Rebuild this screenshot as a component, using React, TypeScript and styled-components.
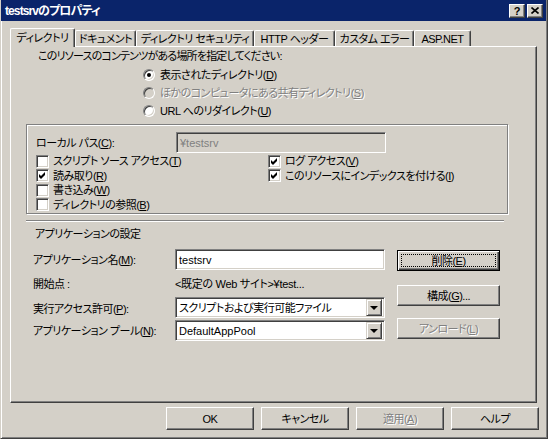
import styled, { createGlobalStyle } from "styled-components";

const GlobalStyle = createGlobalStyle`
  html, body {
    margin: 0;
    padding: 0;
    background: #d4d0c8;
  }
  body {
    font-family: "Liberation Sans", "Noto Sans CJK JP", sans-serif;
    font-size: 11px;
    line-height: 14px;
    letter-spacing: -0.5px;
    color: #000;
    font-feature-settings: "palt";
  }
  * {
    box-sizing: border-box;
  }
`;

const Window = styled.div`
  width: 548px;
  height: 439px;
  background: #d4d0c8;
  border-left: 1px solid #d4d0c8;
  border-right: 1px solid #404040;
  border-bottom: 1px solid #404040;
  box-shadow: inset 1px 0 #fff, inset -1px -1px #808080;
  display: flex;
  flex-direction: column;
  overflow: hidden;
`;

const TitleBar = styled.div`
  height: 21px;
  margin: 0 1px 0 -1px;
  background: #0a246a;
  color: #fff;
  font-weight: bold;
  font-size: 12px;
  letter-spacing: -0.9px;
  display: flex;
  align-items: center;
  padding: 0 3px 0 5px;
`;

const TitleText = styled.span`
  flex: 1;
`;

const TitleButtons = styled.div`
  display: flex;
  gap: 2px;
`;

const TitleButton = styled.div`
  width: 16px;
  height: 14px;
  background: #d4d0c8;
  border: 1px solid;
  border-color: #fff #404040 #404040 #fff;
  box-shadow: inset -1px -1px #808080;
  color: #000;
  display: flex;
  align-items: center;
  justify-content: center;
  font-family: "Liberation Sans", sans-serif;
  font-size: 11px;
  font-weight: bold;
  letter-spacing: 0;
`;

const Body = styled.div`
  flex: 1;
  padding: 7px 8px 0 9px;
  display: flex;
  flex-direction: column;
`;

const TabStrip = styled.div`
  height: 18px;
  display: flex;
  align-items: flex-end;
`;

const Tab = styled.div<{ $w: number; $active?: boolean }>`
  width: ${(p) => p.$w}px;
  height: ${(p) => (p.$active ? 19 : 16)}px;
  margin-bottom: ${(p) => (p.$active ? -1 : 0)}px;
  position: relative;
  z-index: ${(p) => (p.$active ? 2 : 0)};
  background: #d4d0c8;
  border-top: 1px solid #fff;
  border-left: 1px solid #fff;
  border-right: 1px solid #404040;
  border-radius: 2px 2px 0 0;
  box-shadow: inset -1px 0 #808080;
  display: flex;
  align-items: ${(p) => (p.$active ? "flex-start" : "center")};
  padding-top: ${(p) => (p.$active ? 2 : 0)}px;
  justify-content: center;
  white-space: nowrap;
`;

const Panel = styled.div`
  width: 527px;
  height: 357px;
  position: relative;
  z-index: 1;
  background: #d4d0c8;
  border-top: 1px solid #fff;
  border-left: 1px solid #fff;
  border-right: 1px solid #404040;
  border-bottom: 1px solid #404040;
  box-shadow: inset -1px -1px #808080;
  padding-top: 2px;
  display: flex;
  flex-direction: column;
`;

const Prompt = styled.div`
  margin-left: 27px;
  white-space: nowrap;
  letter-spacing: -0.8px;
`;

const RadioList = styled.div`
  margin: 3px 0 0 132px;
  display: flex;
  flex-direction: column;
`;

const RadioRow = styled.label<{ $disabled?: boolean }>`
  height: 18px;
  display: flex;
  align-items: center;
  gap: 5px;
  white-space: nowrap;
  color: ${(p) => (p.$disabled ? "#808080" : "#000")};
  text-shadow: ${(p) => (p.$disabled ? "1px 1px #fff" : "none")};
`;

const RadioDot = styled.span<{ $checked?: boolean; $disabled?: boolean }>`
  width: 12px;
  height: 12px;
  border-radius: 50%;
  border: 1px solid;
  border-color: #808080 #fff #fff #808080;
  box-shadow: inset 1px 1px #404040, inset -1px -1px #d4d0c8;
  background: ${(p) => (p.$disabled ? "#d4d0c8" : "#fff")};
  display: flex;
  align-items: center;
  justify-content: center;
  flex-shrink: 0;
  &::after {
    content: "";
    width: 4px;
    height: 4px;
    border-radius: 50%;
    background: #000;
    display: ${(p) => (p.$checked ? "block" : "none")};
  }
`;

const GroupBox = styled.div`
  margin: 4px 0 0 15px;
  width: 482px;
  height: 90px;
  border: 1px solid #808080;
  box-shadow: inset 1px 1px #fff, 1px 1px #fff;
  padding: 7px 0 0 9px;
  display: flex;
  flex-direction: column;
`;

const PathRow = styled.div`
  height: 21px;
  display: flex;
  align-items: center;
`;

const PathLabel = styled.span`
  width: 140px;
  white-space: nowrap;
`;

const TextBox = styled.div<{ $disabled?: boolean; $w: number }>`
  width: ${(p) => p.$w}px;
  height: 21px;
  background: ${(p) => (p.$disabled ? "#d4d0c8" : "#fff")};
  color: ${(p) => (p.$disabled ? "#808080" : "#000")};
  border: 1px solid;
  border-color: #808080 #fff #fff #808080;
  box-shadow: inset 1px 1px #404040, inset -1px -1px #d4d0c8;
  padding: 0 3px;
  display: flex;
  align-items: center;
  white-space: nowrap;
  overflow: hidden;
  letter-spacing: 0;
`;

const CheckGrid = styled.div`
  margin-top: 1px;
  display: grid;
  grid-template-columns: 232px 1fr;
  grid-auto-flow: column;
  grid-template-rows: repeat(4, 14.5px);
`;

const CheckRow = styled.label`
  display: flex;
  align-items: center;
  gap: 4px;
  white-space: nowrap;
`;

const CheckBox = styled.span`
  width: 13px;
  height: 13px;
  flex-shrink: 0;
  background: #fff;
  border: 1px solid;
  border-color: #808080 #fff #fff #808080;
  box-shadow: inset 1px 1px #404040, inset -1px -1px #d4d0c8;
  display: flex;
  align-items: center;
  justify-content: center;
`;

const Separator = styled.div`
  margin: 6px 0 0 15px;
  width: 478px;
  height: 2px;
  border-top: 1px solid #808080;
  border-bottom: 1px solid #fff;
`;

const SectionTitle = styled.div`
  margin: 5px 0 0 24px;
  white-space: nowrap;
`;

const AppArea = styled.div`
  margin: 8px 0 0 22px;
  display: flex;
`;

const AppGrid = styled.div`
  display: grid;
  grid-template-columns: 142px 210px;
  grid-template-rows: 21px 27px 23px 21px;
  align-items: start;
`;

const AppLabel = styled.span`
  white-space: nowrap;
  align-self: center;
`;

const AppValue = styled.span`
  align-self: center;
  white-space: nowrap;
  letter-spacing: -0.3px;
`;

const Select = styled.div`
  width: 210px;
  height: 21px;
  background: #fff;
  border: 1px solid;
  border-color: #808080 #fff #fff #808080;
  box-shadow: inset 1px 1px #404040, inset -1px -1px #d4d0c8;
  padding: 2px 2px 2px 3px;
  display: flex;
  align-items: center;
  white-space: nowrap;
`;

const SelectText = styled.span<{ $latin?: boolean }>`
  flex: 1;
  overflow: hidden;
  letter-spacing: ${(p) => (p.$latin ? "0" : "-0.5px")};
`;

const DropButton = styled.span`
  width: 16px;
  height: 17px;
  background: #d4d0c8;
  border: 1px solid;
  border-color: #d4d0c8 #404040 #404040 #d4d0c8;
  box-shadow: inset 1px 1px #fff, inset -1px -1px #808080;
  display: flex;
  align-items: center;
  justify-content: center;
  &::after {
    content: "";
    border-left: 4px solid transparent;
    border-right: 4px solid transparent;
    border-top: 4px solid #000;
    margin-top: 1px;
  }
`;

const ButtonColumn = styled.div`
  margin-left: 12px;
  display: flex;
  flex-direction: column;
`;

const Button = styled.div<{
  $w: number;
  $h: number;
  $mt?: number;
  $default?: boolean;
  $disabled?: boolean;
}>`
  width: ${(p) => p.$w}px;
  height: ${(p) => p.$h}px;
  margin-top: ${(p) => p.$mt ?? 0}px;
  background: #d4d0c8;
  border: 1px solid;
  border-color: ${(p) => (p.$default ? "#000" : "#fff #404040 #404040 #fff")};
  box-shadow: ${(p) =>
    p.$default
      ? "inset 1px 1px #fff, inset -1px -1px #404040, inset -2px -2px #808080"
      : "inset -1px -1px #808080"};
  color: ${(p) => (p.$disabled ? "#808080" : "#000")};
  text-shadow: ${(p) => (p.$disabled ? "1px 1px #fff" : "none")};
  display: flex;
  align-items: center;
  justify-content: center;
  white-space: nowrap;
  position: relative;
`;

const FocusRing = styled.span`
  position: absolute;
  inset: 3px;
  border: 1px dotted #000;
`;

const ButtonRow = styled.div`
  margin-top: 4px;
  display: flex;
  justify-content: flex-end;
  gap: 7px;
`;

const Check = () => (
  <svg width="9" height="9" viewBox="0 0 9 9">
    <polygon points="1,3 3,5 7,1 7,4 3,8 1,6" fill="#000" />
  </svg>
);

const CloseIcon = () => (
  <svg width="8" height="7" viewBox="0 0 8 7">
    <path d="M0.5 0.5 L7.5 6.5 M7.5 0.5 L0.5 6.5" stroke="#000" strokeWidth="1.6" />
  </svg>
);

const tabs: { label: string; w: number }[] = [
  { label: "ディレクトリ", w: 65 },
  { label: "ドキュメント", w: 61 },
  { label: "ディレクトリ セキュリティ", w: 118 },
  { label: "HTTP ヘッダー", w: 81 },
  { label: "カスタム エラー", w: 79 },
  { label: "ASP.NET", w: 57 },
];

const App = () => {
  return (
    <>
      <GlobalStyle />
      <Window>
        <TitleBar>
          <TitleText>testsrvのプロパティ</TitleText>
          <TitleButtons>
            <TitleButton>?</TitleButton>
            <TitleButton>
              <CloseIcon />
            </TitleButton>
          </TitleButtons>
        </TitleBar>
        <Body>
          <TabStrip>
            {tabs.map((t, i) => (
              <Tab key={t.label} $w={t.w} $active={i === 0}>
                {t.label}
              </Tab>
            ))}
          </TabStrip>
          <Panel>
            <Prompt>このリソースのコンテンツがある場所を指定してください:</Prompt>
            <RadioList>
              <RadioRow>
                <RadioDot $checked />
                <span>
                  表示されたディレクトリ(<u>D</u>)
                </span>
              </RadioRow>
              <RadioRow $disabled>
                <RadioDot $disabled />
                <span>
                  ほかのコンピュータにある共有ディレクトリ(<u>S</u>)
                </span>
              </RadioRow>
              <RadioRow>
                <RadioDot />
                <span>
                  URL へのリダイレクト(<u>U</u>)
                </span>
              </RadioRow>
            </RadioList>
            <GroupBox>
              <PathRow>
                <PathLabel>
                  ローカル パス(<u>C</u>):
                </PathLabel>
                <TextBox $disabled $w={210}>
                  ¥testsrv
                </TextBox>
              </PathRow>
              <CheckGrid>
                <CheckRow>
                  <CheckBox />
                  <span>
                    スクリプト ソース アクセス(<u>T</u>)
                  </span>
                </CheckRow>
                <CheckRow>
                  <CheckBox>
                    <Check />
                  </CheckBox>
                  <span>
                    読み取り(<u>R</u>)
                  </span>
                </CheckRow>
                <CheckRow>
                  <CheckBox />
                  <span>
                    書き込み(<u>W</u>)
                  </span>
                </CheckRow>
                <CheckRow>
                  <CheckBox />
                  <span>
                    ディレクトリの参照(<u>B</u>)
                  </span>
                </CheckRow>
                <CheckRow>
                  <CheckBox>
                    <Check />
                  </CheckBox>
                  <span>
                    ログ アクセス(<u>V</u>)
                  </span>
                </CheckRow>
                <CheckRow>
                  <CheckBox>
                    <Check />
                  </CheckBox>
                  <span>
                    このリソースにインデックスを付ける(<u>I</u>)
                  </span>
                </CheckRow>
              </CheckGrid>
            </GroupBox>
            <Separator />
            <SectionTitle>アプリケーションの設定</SectionTitle>
            <AppArea>
              <AppGrid>
                <AppLabel>
                  アプリケーション名(<u>M</u>):
                </AppLabel>
                <TextBox $w={210}>testsrv</TextBox>
                <AppLabel>開始点 :</AppLabel>
                <AppValue>&lt;既定の Web サイト&gt;¥test...</AppValue>
                <AppLabel>
                  実行アクセス許可(<u>P</u>):
                </AppLabel>
                <Select>
                  <SelectText>スクリプトおよび実行可能ファイル</SelectText>
                  <DropButton />
                </Select>
                <AppLabel>
                  アプリケーション プール(<u>N</u>):
                </AppLabel>
                <Select>
                  <SelectText $latin>DefaultAppPool</SelectText>
                  <DropButton />
                </Select>
              </AppGrid>
              <ButtonColumn>
                <Button $w={103} $h={21} $mt={1} $default>
                  <FocusRing />
                  削除(<u>E</u>)
                </Button>
                <Button $w={103} $h={21} $mt={14}>
                  構成(<u>G</u>)...
                </Button>
                <Button $w={103} $h={21} $mt={12} $disabled>
                  アンロード(<u>L</u>)
                </Button>
              </ButtonColumn>
            </AppArea>
          </Panel>
          <ButtonRow>
            <Button $w={88} $h={23}>
              OK
            </Button>
            <Button $w={88} $h={23}>
              キャンセル
            </Button>
            <Button $w={88} $h={23} $disabled>
              適用(<u>A</u>)
            </Button>
            <Button $w={88} $h={23}>
              ヘルプ
            </Button>
          </ButtonRow>
        </Body>
      </Window>
    </>
  );
};

export default App;
